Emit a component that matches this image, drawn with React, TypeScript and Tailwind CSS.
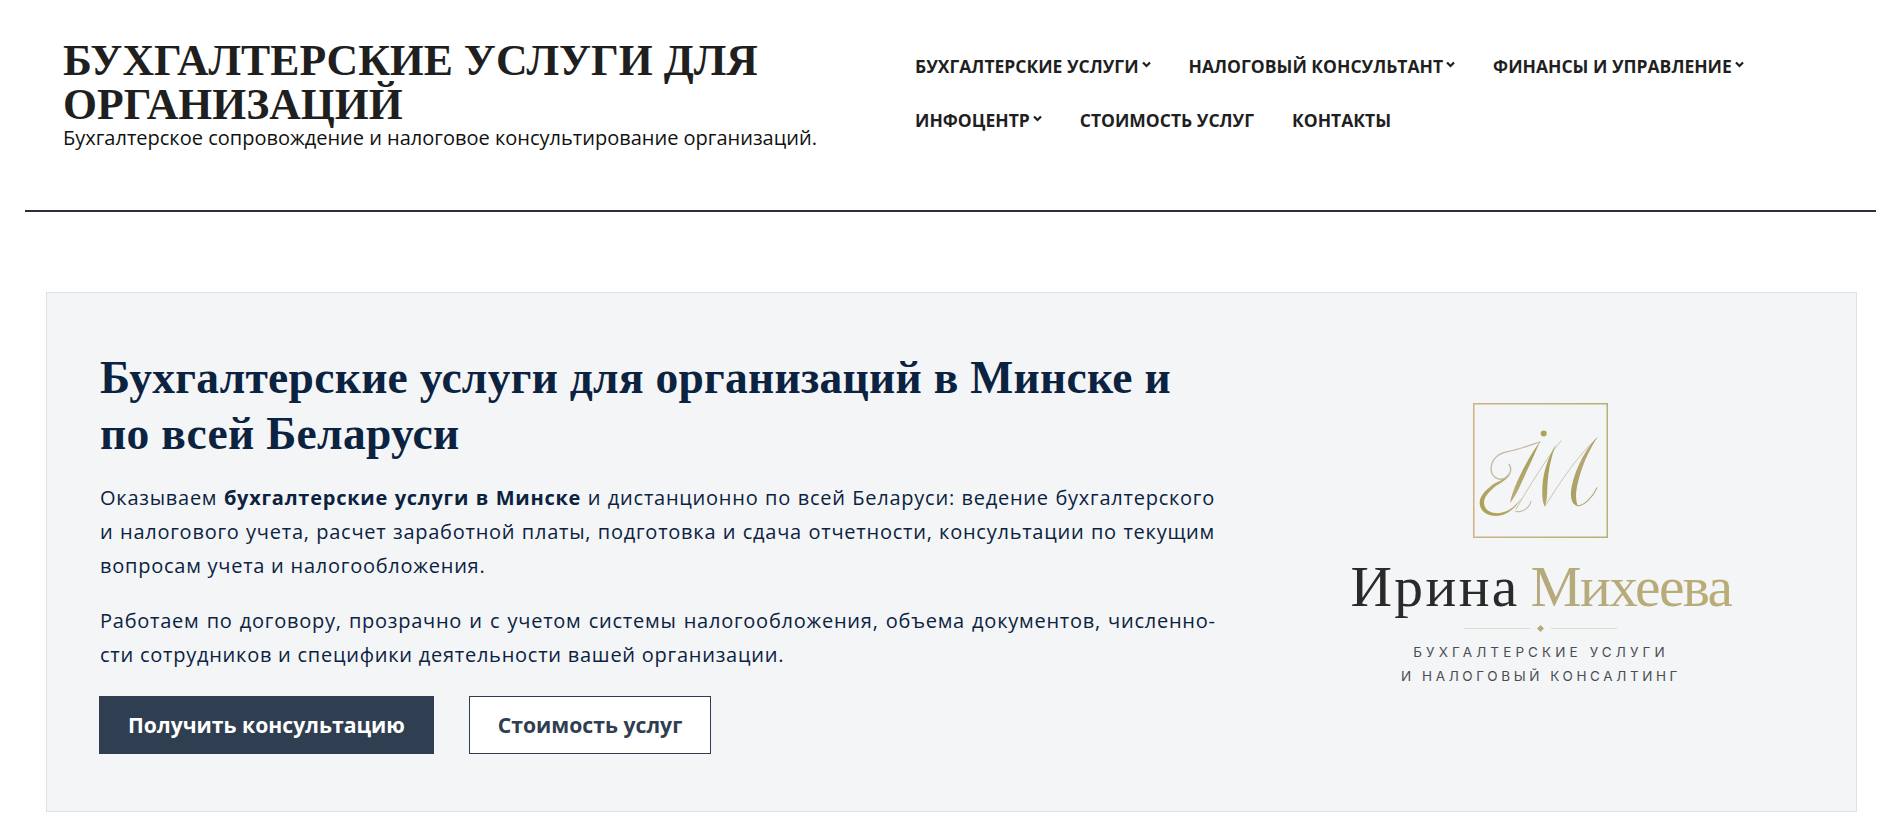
export default function App() {
  const Chevron = () => (
    <svg width="9" height="7" viewBox="0 0 9 7" className="ml-[3px] mt-[-3px] shrink-0" fill="none" stroke="#1f1f1f" strokeWidth="2.2">
      <path d="M1 1.4 4.5 5 8 1.4" />
    </svg>
  );
  const Item = ({ label, chevron }: { label: string; chevron?: boolean }) => (
    <a className="flex items-center h-[54px] text-[17.5px] font-bold uppercase text-[#1f1f1f] whitespace-nowrap">
      {label}
      {chevron && <Chevron />}
    </a>
  );
  return (
    <div className="w-[1884px] h-[830px] overflow-hidden bg-white font-['Open_Sans',sans-serif]">
      <header className="mx-[25px] w-[1851px] h-[212px] border-b-2 border-[#2d2f38] flex items-start">
        <div className="ml-[38px] mt-[38px] w-[790px] shrink-0">
          <h1 className="font-['Liberation_Serif',serif] font-bold text-[43.7px] leading-[44px] text-[#1f1f1f] uppercase">
            Бухгалтерские услуги для организаций
          </h1>
          <p className="text-[20px] leading-[24px] text-[#111] mt-0">
            Бухгалтерское сопровождение и налоговое консультирование организаций.
          </p>
        </div>
        <nav className="ml-[62px] mt-[39px] flex flex-wrap gap-x-[38px] w-[900px]">
          <Item label="Бухгалтерские услуги" chevron />
          <Item label="Налоговый консультант" chevron />
          <Item label="Финансы и управление" chevron />
          <Item label="Инфоцентр" chevron />
          <Item label="Стоимость услуг" />
          <Item label="Контакты" />
        </nav>
      </header>
      <main className="ml-[46px] mt-[80px] w-[1811px] h-[520px] bg-[#f4f5f7] border border-[#dde2e9] flex">
        <div className="ml-[52px] mt-[57px] w-[1116px] shrink-0">
          <h2 className="ml-px w-[1095px] font-['Liberation_Serif',serif] font-bold text-[45.5px] leading-[56px] tracking-[0.28px] text-[#0b2340]">
            Бухгалтерские услуги для организаций в Минске и по всей Беларуси
          </h2>
          <p className="ml-px mt-[19px] text-[20px] leading-[34px] tracking-[0.75px] text-[#0b2340] text-justify">
            Оказываем <strong className="font-bold">бухгалтерские услуги в Минске</strong> и дистанционно по всей Беларуси: ведение бухгалтерского и налогового учета, расчет заработной платы, подготовка и сдача отчетности, консультации по текущим вопросам учета и налогообложения.
          </p>
          <p className="ml-px mt-[21px] text-[20px] leading-[34px] tracking-[0.75px] text-[#0b2340] text-justify">
            Работаем по договору, прозрачно и с учетом системы налогообложения, объема документов, численно&shy;сти сотрудников и специфики деятельности вашей организации.
          </p>
          <div className="flex gap-[35px] mt-[24px]">
            <a className="h-[58px] w-[335px] flex items-center justify-center bg-[#2f3e50] text-white font-bold text-[21.2px]">Получить консультацию</a>
            <a className="h-[58px] w-[242px] flex items-center justify-center bg-white border border-[#2f3e50] text-[#2f3e50] font-bold text-[21.2px]">Стоимость услуг</a>
          </div>
        </div>
        <div className="ml-[115px] w-[420px] flex flex-col items-center pt-[110px]">
          <svg width="135" height="135" viewBox="22 15 403 403" fill="none" className="shrink-0">
            <defs>
              <linearGradient id="gold" gradientUnits="userSpaceOnUse" x1="40" y1="350" x2="400" y2="110">
                <stop offset="0" stopColor="#ad9f4e" />
                <stop offset="0.3" stopColor="#b9aa76" />
                <stop offset="0.55" stopColor="#a9a05c" />
                <stop offset="0.8" stopColor="#b4a674" />
                <stop offset="1" stopColor="#a9a05c" />
              </linearGradient>
              <linearGradient id="frame" gradientUnits="userSpaceOnUse" x1="22" y1="200" x2="425" y2="200">
                <stop offset="0" stopColor="#d1b285" />
                <stop offset="1" stopColor="#b5b174" />
              </linearGradient>
            </defs>
            <rect x="24" y="17" width="399" height="399" stroke="url(#frame)" strokeWidth="5" />
            <circle cx="233" cy="106" r="9" fill="#aca35c" />
            <g stroke="#c2b9a0" strokeLinecap="round">
              <path d="M222 132C205 135 170 152 125 160C95 166 76 185 76 212C76 235 98 248 116 240C132 232 140 214 130 198" strokeWidth="4" />
              <path d="M285 128C240 180 190 265 150 332" strokeWidth="2.5" />
              <path d="M150 338C170 345 192 325 195 308" strokeWidth="3" />
              <path d="M238 322C270 270 330 175 392 120" strokeWidth="2.5" />
            </g>
            <g stroke="url(#gold)" strokeLinecap="round">
              <path d="M334 322C355 322 380 295 392 268" strokeWidth="3" />
            </g>
            <g fill="url(#gold)">
              <path d="M134 225C118 247 92 248 74 264C54 280 40 298 42 316C44 340 66 352 92 352C122 352 148 330 168 298C146 326 122 344 94 344C72 344 56 332 55 314C54 296 68 282 84 268C100 255 122 248 134 225Z" />
              <path d="M222 130C200 160 170 210 146 268C140 285 134 300 133 314C143 300 152 285 160 268C180 225 205 170 222 130Z" />
              <path d="M270 138C250 170 232 215 229 265C228 290 229 310 236 324C243 310 243 290 244 265C246 220 255 175 270 138Z" />
              <path d="M394 116C360 150 330 205 317 262C311 292 314 318 335 323C328 305 328 285 333 262C343 215 365 160 394 116Z" />
            </g>
          </svg>
          <div className="mt-[16px] pl-[2px] font-['Liberation_Serif',serif] text-[57.5px] leading-[66px] whitespace-nowrap">
            <span className="text-[#2a2a2a] tracking-[2.4px]">Ирина </span>
            <span className="ml-[-6px] bg-gradient-to-r from-[#b5aa7c] to-[#b9ac76] bg-clip-text text-transparent tracking-[-1.6px]">Михеева</span>
          </div>
          <div className="mt-[6px] flex items-center gap-[8px]">
            <span className="block w-[66px] h-px bg-[#dfdccd]" />
            <span className="block w-[5px] h-[5px] rotate-45 bg-[#b5aa78]" />
            <span className="block w-[66px] h-px bg-[#dfdccd]" />
          </div>
          <p className="mt-[9px] pl-[2px] text-center font-['Inter',sans-serif] text-[13.5px] leading-[24px] text-[#4a4d52] whitespace-nowrap">
            <span className="block tracking-[4.1px]">БУХГАЛТЕРСКИЕ УСЛУГИ</span>
            <span className="block tracking-[3.6px]">И НАЛОГОВЫЙ КОНСАЛТИНГ</span>
          </p>
        </div>
      </main>
    </div>
  );
}
